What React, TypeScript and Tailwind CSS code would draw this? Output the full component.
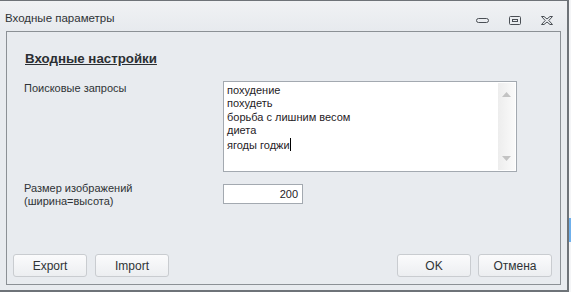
import React from "react";

const font = { fontFamily: '"Liberation Sans", "DejaVu Sans", sans-serif' };

const Btn: React.FC<{ label: string }> = ({ label }) => (
  <button className="w-[74px] h-[23px] rounded-[3px] border border-[#c9ccd0] bg-gradient-to-b from-[#fbfbfc] to-[#eceef1] text-[12px] text-[#2f3336]">
    {label}
  </button>
);

const queries = ["похудение", "похудеть", "борьба с лишним весом", "диета", "ягоды годжи"];

export default function App() {
  return (
    <div className="w-[571px] h-[292px] flex bg-[#f4f5f7] overflow-hidden" style={font}>
      {/* окно */}
      <div className="w-[569px] h-[292px] flex flex-col border-t border-r-2 border-b-2 border-[#6e7378] bg-[#e8ebef]">
        {/* заголовок */}
        <div className="h-[30px] flex items-center justify-between pl-[5px] pr-[14px] bg-gradient-to-b from-[#f0f2f4] to-[#e7eaee]">
          <span className="text-[11.5px] text-[#2f3336] pt-[6px]">Входные параметры</span>
          <div className="flex items-center gap-[20px] pt-[8px]">
            <svg width="13" height="5" viewBox="0 0 13 5">
              <rect x="0.5" y="0.5" width="12" height="4" rx="2" fill="none" stroke="#4a4f55" />
            </svg>
            <svg width="12" height="9" viewBox="0 0 12 9">
              <rect x="0.5" y="0.5" width="11" height="8" rx="1" fill="none" stroke="#4a4f55" />
              <rect x="3.5" y="3.5" width="5" height="2" fill="none" stroke="#4a4f55" />
            </svg>
            <svg width="12" height="9" viewBox="0 0 12 9">
              <path
                d="M0.5 0.5 H3 L6 3 L9 0.5 H11.5 L7.8 4.5 L11.5 8.5 H9 L6 6 L3 8.5 H0.5 L4.2 4.5 Z"
                fill="none"
                stroke="#4a4f55"
                strokeWidth="1"
              />
            </svg>
          </div>
        </div>

        {/* панель */}
        <div className="flex-1 px-[6px] pb-[5px]">
          <div className="h-full flex flex-col border border-[#8b9095] bg-[#e8ebef]">
            <div className="pl-[18px] pt-[17px] text-[13.3px] font-bold underline text-[#2c2f33]">
              Входные настройки
            </div>

            <div className="flex mt-[12px] pl-[17px]">
              <div className="w-[199px] text-[11px] text-[#2f3336] -mt-[1px]">Поисковые запросы</div>
              <div className="w-[294px] h-[91px] flex border border-[#a3a9b0] bg-white">
                <div className="flex-1 pl-[3px] pt-[2px] text-[11px] leading-[13.4px] text-[#1f2226]">
                  {queries.map((q, i) => (
                    <div key={q}>
                      {q}
                      {i === queries.length - 1 && (
                        <span className="inline-block w-px h-[13px] bg-black align-[-2px]" />
                      )}
                    </div>
                  ))}
                </div>
                <div className="w-[17px] mr-[1px] my-[1px] flex flex-col justify-between items-center py-[9px] bg-gradient-to-r from-[#ededed] to-[#fafafa]">
                  <svg width="9" height="5" viewBox="0 0 9 5">
                    <path d="M0 5 L4.5 0 L9 5 Z" fill="#c3c3c3" />
                  </svg>
                  <svg width="9" height="5" viewBox="0 0 9 5">
                    <path d="M0 0 L4.5 5 L9 0 Z" fill="#c3c3c3" />
                  </svg>
                </div>
              </div>
            </div>

            <div className="flex mt-[12px] pl-[17px]">
              <div className="w-[199px] text-[11px] leading-[13px] text-[#2f3336] -mt-[2px]">
                Размер изображений
                <br />
                (ширина=высота)
              </div>
              <div className="w-[80px] h-[20px] border border-[#a3a9b0] bg-white text-right pr-[4px] text-[11px] leading-[18px] text-[#1f2226]">
                200
              </div>
            </div>

            <div className="mt-auto flex justify-between pl-[6px] pr-[8px] pb-[7px]">
              <div className="flex gap-[8px]">
                <Btn label="Export" />
                <Btn label="Import" />
              </div>
              <div className="flex gap-[7px]">
                <Btn label="OK" />
                <Btn label="Отмена" />
              </div>
            </div>
          </div>
        </div>
      </div>

      {/* край соседнего окна */}
      <div className="flex-1 flex flex-col pt-[218px]">
        <div className="h-[24px] bg-[#6fb0ec]" />
      </div>
    </div>
  );
}
